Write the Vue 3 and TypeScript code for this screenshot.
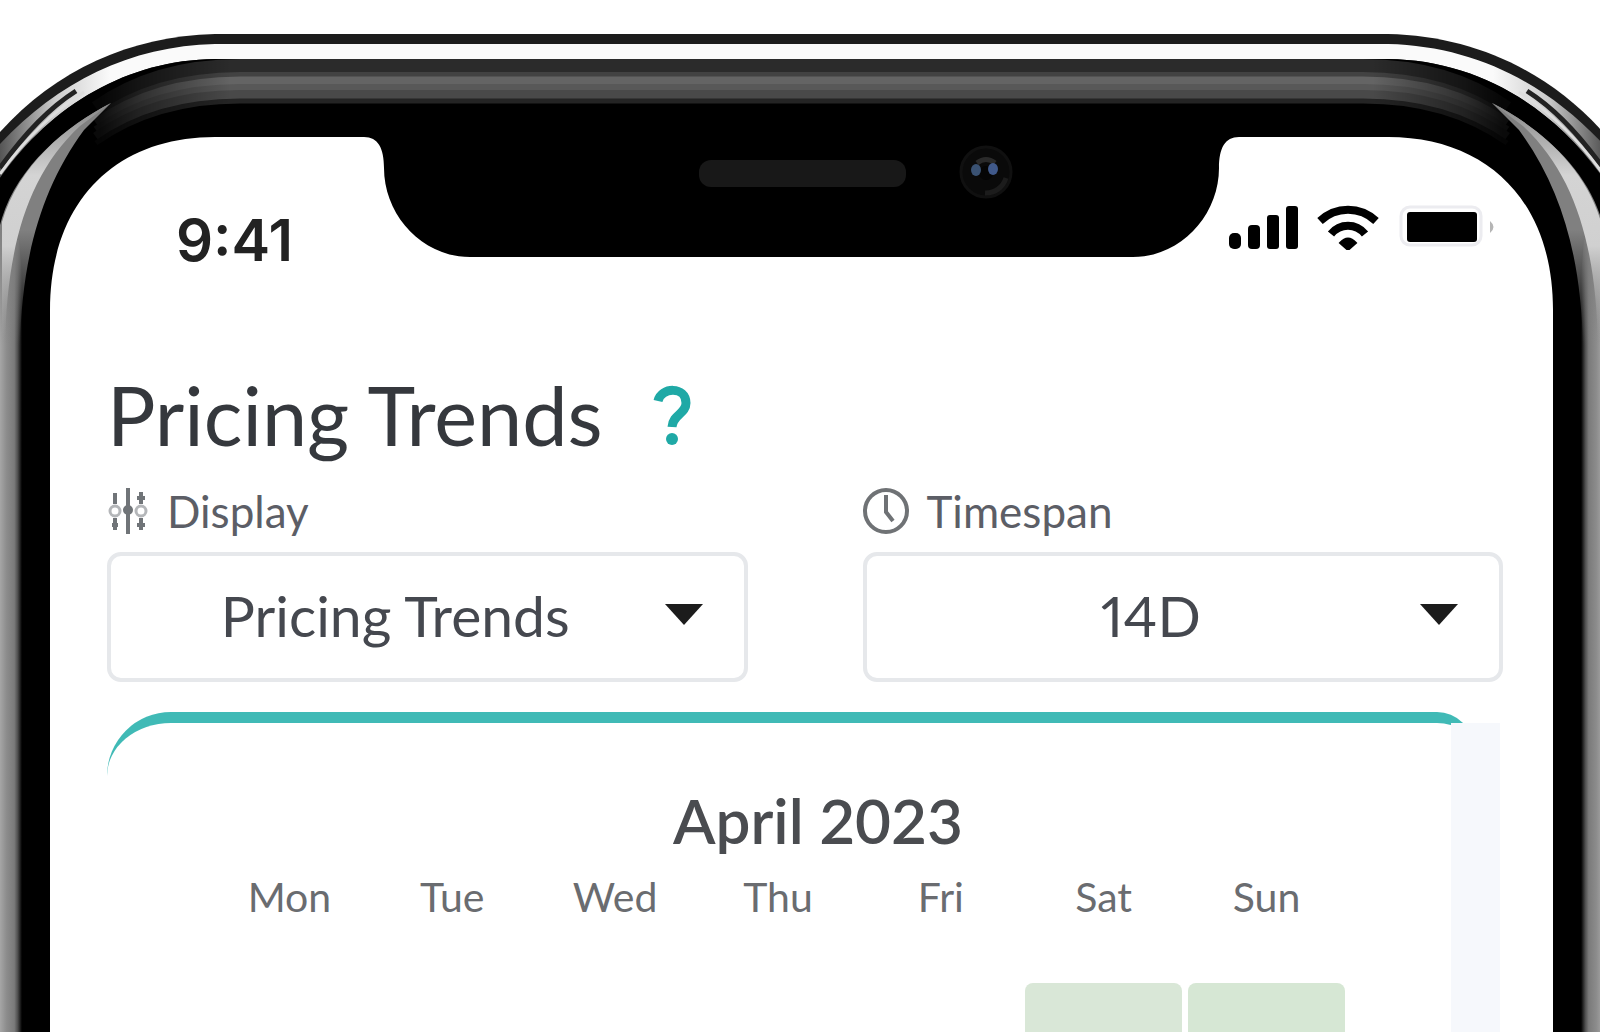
<script setup lang="ts">
import { ref } from 'vue'

interface Band {
  y: number
  width: number
  color: string
}

const bezelBands: Band[] = [
  { y: 66, width: 14, color: '#2b2b2b' },
  { y: 75, width: 6, color: '#424242' },
  { y: 81, width: 9, color: '#646464' },
  { y: 88, width: 8, color: '#585858' },
  { y: 95, width: 10, color: '#494949' },
  { y: 101, width: 5, color: '#242424' },
]

const bandPath = (y: number): string =>
  `M 96 ${y + 42} C 134 ${y + 15} 180 ${y} 240 ${y} H 802`

const display = ref('Pricing Trends')
const displayOptions = ['Pricing Trends', 'Occupancy Trends']
const timespan = ref('14D')
const timespanOptions = ['7D', '14D', '30D']

const weekdays = ['Mon', 'Tue', 'Wed', 'Thu', 'Fri', 'Sat', 'Sun']
const firstWeek = ['', '', '', '', '', 'low', 'lower']
</script>

<template>
  <div class="phone">
    <svg class="frame" viewBox="0 0 1600 1032" preserveAspectRatio="none" aria-hidden="true">
      <defs>
        <linearGradient id="rail" x1="0" x2="22" y1="0" y2="0" gradientUnits="userSpaceOnUse">
          <stop offset="0" stop-color="#a6a6a6" />
          <stop offset="0.3" stop-color="#8c8c8c" />
          <stop offset="0.65" stop-color="#7a7a7a" />
          <stop offset="0.8" stop-color="#505050" />
          <stop offset="1" stop-color="#000" />
        </linearGradient>
        <linearGradient id="wedgeFade" x1="0" x2="0" y1="230" y2="345" gradientUnits="userSpaceOnUse">
          <stop offset="0" stop-color="#808080" />
          <stop offset="1" stop-color="#808080" stop-opacity="0" />
        </linearGradient>
        <linearGradient id="edgeFade" x1="0" x2="0" y1="105" y2="340" gradientUnits="userSpaceOnUse">
          <stop offset="0" stop-color="#888" />
          <stop offset="0.3" stop-color="#d4d4d4" />
          <stop offset="0.6" stop-color="#d0d0d0" />
          <stop offset="1" stop-color="#a6a6a6" stop-opacity="0" />
        </linearGradient>
        <linearGradient id="fade" x1="100" x2="230" y1="0" y2="0" gradientUnits="userSpaceOnUse">
          <stop offset="0" stop-color="#222" />
          <stop offset="0.3" stop-color="#777" />
          <stop offset="1" stop-color="#fff" />
        </linearGradient>
        <linearGradient id="shine" x1="0" x2="110" y1="0" y2="0" gradientUnits="userSpaceOnUse">
          <stop offset="0" stop-color="#555" />
          <stop offset="0.5" stop-color="#ccc" />
          <stop offset="1" stop-color="#fafafa" />
        </linearGradient>
        <mask id="bandFade" maskUnits="userSpaceOnUse" x="0" y="0" width="804" height="1032">
          <rect width="804" height="1032" fill="url(#fade)" />
        </mask>
        <g id="half">
          <path d="M 802 34 H 215 C 130 36 56 70 0 132 L -80 260 V 1032 H 802 Z" fill="#1c1c1c" />
          <path d="M 802 44 H 215 C 130 46 58 82 0 144 V 178 C 52 104 128 60 215 59 H 802 Z" fill="url(#shine)" />
          <path d="M 802 59 H 215 C 128 60 52 104 0 178 V 1032 H 802 Z" fill="#000" />
          <path d="M 0 168 C 22 137 46 110 76 91" fill="none" stroke="#222" stroke-width="5" />
          <path d="M 0 174 C 20 146 46 116 84 92" fill="none" stroke="#ddd" stroke-width="3" />
          <g mask="url(#bandFade)" fill="none">
            <path
              v-for="band in bezelBands"
              :key="band.y"
              :d="bandPath(band.y)"
              :stroke="band.color"
              :stroke-width="band.width"
            />
          </g>
          <path d="M 0 1032 V 300 L 0 225 L 10 240 H 19 L 24 300 L 22 350 V 1032 Z" fill="url(#rail)" />
          <path
            d="M 111 103 C 66 126 18 166 2 218 L 0 225 V 345 H 20 C 22 260 40 190 84 130 Z"
            fill="url(#wedgeFade)"
          />
          <path d="M 111 103 C 66 126 18 166 2 222 V 345 H 5 C 7 250 26 176 80 126 Z" fill="url(#edgeFade)" />
          <path
            d="M 802 257 H 470 C 422 257 384 215 384 168 C 384 148 378 137 364 137 H 215 C 115 137 50 202 50 310 V 1032 H 802 Z"
            fill="#fff"
          />
        </g>
      </defs>
      <use href="#half" />
      <use href="#half" transform="translate(1603 0) scale(-1 1)" />
      <rect x="699" y="160" width="207" height="27" rx="12" fill="#181818" />
      <circle cx="986" cy="172" r="25" fill="#0a0a0a" stroke="#101010" stroke-width="3" />
      <path d="M 977 163 Q 986 156 995 163" fill="none" stroke="#2a2a2a" stroke-width="5" />
      <path d="M 1006 178 A 21 21 0 0 1 985 193" fill="none" stroke="#1c1c1c" stroke-width="5" />
      <circle cx="986" cy="173" r="7" fill="#050505" />
      <ellipse cx="976" cy="170" rx="5" ry="6" fill="#3a5273" />
      <ellipse cx="993" cy="169" rx="5" ry="6" fill="#40598a" />
    </svg>

    <header class="status">
      <time class="clock">9:41</time>
      <svg class="indicators" width="274" height="50" viewBox="0 0 274 50" aria-label="Signal, Wi-Fi, battery">
        <rect x="2" y="33" width="12" height="16" rx="5" />
        <rect x="21" y="25" width="12" height="24" rx="4" />
        <rect x="40" y="15" width="12" height="34" rx="3" />
        <rect x="59" y="6" width="12" height="43" rx="3" />
        <g fill="none" stroke="#000" stroke-width="8">
          <path d="M 93 21 C 109 6 133 6 149 21" />
          <path d="M 104 34 C 113 23 129 23 138 34" />
        </g>
        <path d="M 113 43 Q 121 34 129 43 L 121 50 Z" stroke="#000" stroke-width="2" />
        <rect x="174" y="7" width="80" height="38" rx="9" fill="#fff" stroke="#ececf0" stroke-width="3" />
        <rect x="180" y="12" width="70" height="30" rx="3" />
        <path d="M 263 21 Q 270 27 263 33 Z" fill="#b5b5b5" />
      </svg>
    </header>

    <main class="content">
      <div class="heading">
        <h1>Pricing Trends</h1>
        <button class="help" type="button" aria-label="Help">
          <svg width="40" height="60" viewBox="0 0 40 60" aria-hidden="true">
            <path
              d="M 5 16 C 8 2 33 1 33 18 C 33 29 20 29 19 42"
              fill="none"
              stroke="#1fa9a6"
              stroke-width="9"
            />
            <circle cx="19" cy="54" r="6" fill="#1fa9a6" />
          </svg>
        </button>
      </div>

      <div class="filters">
        <div class="field">
          <label for="display">
            <svg width="44" height="48" viewBox="0 0 44 48" fill="none" stroke="#707478" stroke-width="4" aria-hidden="true">
              <path d="M 8 6 V 17 M 8 31 V 43 M 21 1 V 47 M 34 5 V 17 M 34 31 V 43" />
              <circle cx="8" cy="24" r="5" stroke="#b4b6b9" stroke-width="3" />
              <circle cx="21" cy="23" r="3" />
              <circle cx="34" cy="24" r="5" stroke="#b4b6b9" stroke-width="3" />
              <path d="M 30 11 H 38 M 30 38 H 38 M 5 38 H 11" />
            </svg>
            Display
          </label>
          <div class="picker">
            <select id="display" v-model="display">
              <option v-for="option in displayOptions" :key="option">{{ option }}</option>
            </select>
            <svg class="caret" width="40" height="22" viewBox="0 0 40 22" aria-hidden="true">
              <path d="M 1 1 H 39 L 20 22 Z" />
            </svg>
          </div>
        </div>
        <div class="field">
          <label for="timespan">
            <svg width="48" height="48" viewBox="0 0 48 48" fill="none" stroke="#6f7275" stroke-width="4" aria-hidden="true">
              <circle cx="23" cy="24" r="21" />
              <path d="M 23 8 V 25 L 30 34" />
            </svg>
            Timespan
          </label>
          <div class="picker">
            <select id="timespan" v-model="timespan">
              <option v-for="option in timespanOptions" :key="option">{{ option }}</option>
            </select>
            <svg class="caret" width="40" height="22" viewBox="0 0 40 22" aria-hidden="true">
              <path d="M 1 1 H 39 L 20 22 Z" />
            </svg>
          </div>
        </div>
      </div>

      <section class="scroller">
        <div class="card">
          <h2>April 2023</h2>
          <table>
            <thead>
              <tr>
                <th v-for="day in weekdays" :key="day" scope="col">{{ day }}</th>
              </tr>
            </thead>
            <tbody>
              <tr>
                <td v-for="(level, index) in firstWeek" :key="index">
                  <div class="tile" :class="level"></div>
                </td>
              </tr>
            </tbody>
          </table>
        </div>
        <div class="track"></div>
      </section>
    </main>
  </div>
</template>

<style>
body {
  background: #fff;
}
</style>

<style scoped>
.phone {
  position: relative;
  height: 100vh;
  overflow: hidden;
  font-family: Lato, "Liberation Sans", sans-serif;
  color: #35383d;
}

.frame {
  position: absolute;
  inset: 0;
  width: 100%;
  height: 100%;
}

.status {
  position: relative;
  display: flex;
  justify-content: space-between;
  align-items: flex-start;
  height: 171px;
  padding: 200px 99px 0 176px;
}

.clock {
  padding-top: 4px;
  font-family: Inter, "Liberation Sans", sans-serif;
  font-size: 58px;
  font-weight: 600;
  line-height: 72px;
  color: #222;
}

.content {
  position: relative;
  padding: 0 97px 0 107px;
}

.heading {
  display: flex;
  align-items: center;
  gap: 50px;
}

h1 {
  margin: 0;
  font-size: 81px;
  font-weight: 400;
  line-height: 88px;
}

.help {
  display: flex;
  padding: 0;
  border: 0;
  background: none;
}

.filters {
  display: grid;
  grid-template-columns: 1fr 1fr;
  gap: 115px;
  margin-top: 26px;
}

label {
  display: flex;
  align-items: center;
  gap: 16px;
  font-size: 44px;
  line-height: 52px;
  color: #5c5e66;
}

.picker {
  position: relative;
  margin-top: 15px;
}

select {
  display: block;
  width: 100%;
  height: 130px;
  padding: 0 64px 4px 0;
  border: 4px solid #e6e8eb;
  border-radius: 14px;
  background: #fff;
  appearance: none;
  font-family: inherit;
  font-size: 57px;
  font-variant-numeric: proportional-nums;
  color: #45484f;
  text-align: center;
  text-align-last: center;
}

.caret {
  position: absolute;
  top: 51px;
  right: 44px;
  fill: #1c1c1c;
  pointer-events: none;
}

.scroller {
  position: relative;
  margin-top: 30px;
}

.card {
  margin-right: 30px;
  padding: 58px 122px 0 98px;
  border-top: 11px solid #40bab6;
  border-radius: 64px 36px 0 0;
}

.track {
  position: absolute;
  top: 11px;
  right: 3px;
  bottom: 0;
  width: 49px;
  background: #f6f8fc;
}

h2 {
  margin: 0;
  padding-left: 80px;
  font-size: 62px;
  font-weight: 600;
  line-height: 78px;
  text-align: center;
  color: #4a4c50;
}

table {
  width: 100%;
  margin-top: 8px;
  table-layout: fixed;
  border-spacing: 6px;
}

th {
  padding: 0 0 56px;
  font-size: 41px;
  font-weight: 400;
  line-height: 48px;
  color: #6a6c70;
}

td {
  padding: 0;
}

.tile {
  height: 156px;
  border-radius: 8px;
}

.low {
  background: #d9e7d7;
}

.lower {
  background: #d6e7d4;
}
</style>
